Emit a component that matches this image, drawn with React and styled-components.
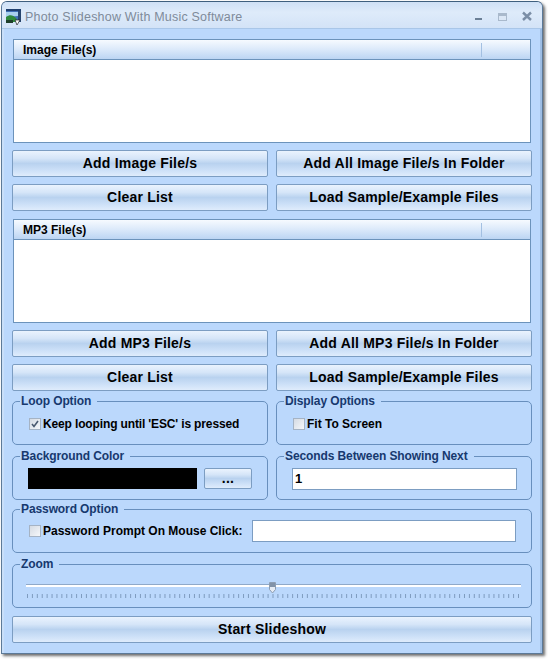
import React from "react";
import styled, { createGlobalStyle } from "styled-components";

const GlobalStyle = createGlobalStyle`
  html, body {
    margin: 0;
    padding: 0;
    background: #fff;
  }
  body {
    font-family: "Liberation Sans", Arial, sans-serif;
    color: #000;
  }
`;

const Page = styled.div`
  width: 550px;
  height: 661px;
  overflow: hidden;
  padding: 1px 0 0 1px;
  box-sizing: border-box;
`;

const Frame = styled.div`
  width: 542px;
  height: 653px;
  box-sizing: border-box;
  display: flex;
  flex-direction: column;
  background: #bbd8fc;
  border: 1px solid #5c7a99;
  border-top-color: #3f5f7e;
  border-radius: 6px 6px 0 0;
  box-shadow: 2px 2px 3px rgba(60, 60, 60, 0.75);
`;

const TitleBar = styled.div`
  height: 27px;
  flex: none;
  box-sizing: border-box;
  display: flex;
  align-items: center;
  padding: 2px 5px 0 3px;
  background: linear-gradient(#cfe0f5 0%, #deebfa 40%, #d3e3f7 100%);
  border-bottom: 1px solid #a9c6e8;
  border-radius: 5px 5px 0 0;
`;

const TitleText = styled.span`
  margin: 2px 0 0 3px;
  font-size: 12.5px;
  letter-spacing: 0.2px;
  color: #7f8b9a;
  flex: 1;
`;

const Body = styled.div`
  flex: 1;
  display: flex;
  flex-direction: column;
  padding: 10px 8px 0 8px;
  border-left: 2px solid #c9dff9;
  border-right: 2px solid #9dbde4;
`;

const ListBox = styled.div`
  height: 104px;
  box-sizing: border-box;
  margin: 0 0 7px 1px;
  width: 518px;
  background: #fff;
  border: 1px solid #6c93bb;
`;

const ListHeader = styled.div`
  height: 20px;
  display: flex;
  align-items: center;
  box-sizing: border-box;
  border-bottom: 1px solid #6c93bb;
  background: linear-gradient(#f6faff 0%, #dbe9fa 50%, #bcd5f3 100%);
  font-size: 12px;
  font-weight: bold;
`;

const HeaderCell = styled.span`
  flex: 1;
  padding-left: 9px;
`;

const HeaderTail = styled.span`
  width: 48px;
  height: 14px;
  border-left: 1px solid #a3c0e2;
`;

const ButtonGrid = styled.div`
  display: grid;
  grid-template-columns: 256px 256px;
  column-gap: 8px;
  row-gap: 7px;
  margin-bottom: ${({ $mb }) => $mb}px;
`;

const Button = styled.button`
  height: ${({ $small }) => ($small ? 21 : 27)}px;
  width: ${({ $small }) => ($small ? "48px" : "auto")};
  flex: none;
  padding: 0 0 2px;
  font-family: inherit;
  font-size: 14px;
  font-weight: bold;
  letter-spacing: 0.2px;
  color: #000;
  border: 1px solid #7c9dc2;
  border-radius: 2px;
  background: linear-gradient(
    #eaf3fe 0%,
    #d5e5f8 30%,
    #b9d2ef 50%,
    #cbdff7 75%,
    #dfecfc 100%
  );
`;

const GroupRow = styled.div`
  display: grid;
  grid-template-columns: 256px 256px;
  column-gap: 8px;
  margin-bottom: ${({ $mb }) => $mb}px;
`;

const FullGroup = styled.div`
  margin-bottom: ${({ $mb }) => $mb}px;
`;

const Group = styled.fieldset`
  margin: 0;
  min-width: 0;
  height: 51px;
  box-sizing: border-box;
  padding: 0 0 ${({ $pb }) => $pb || 5}px 15px;
  border: 1px solid #688fbd;
  border-radius: 5px;
  display: flex;
  align-items: center;
`;

const Legend = styled.legend`
  margin-left: -8px;
  padding: 0 6px 0 1px;
  font-size: 12px;
  font-weight: bold;
  letter-spacing: -0.1px;
  color: #17396e;
`;

const CheckRow = styled.label`
  display: flex;
  align-items: center;
  gap: 2px;
  margin-left: 1px;
  font-size: 12px;
  font-weight: bold;
  letter-spacing: ${({ $tight }) => ($tight ? "-0.14px" : "0")};
  white-space: nowrap;
`;

const CheckBox = styled.span`
  width: 10px;
  height: 10px;
  flex: none;
  display: flex;
  border: 1px solid #a5b3c4;
  background: linear-gradient(135deg, #d5dbe3, #f5f7fa);
`;

const ColorSwatch = styled.div`
  width: 169px;
  height: 21px;
  flex: none;
  background: #000;
  margin-right: 7px;
`;

const TextBox = styled.div`
  box-sizing: border-box;
  height: 22px;
  width: ${({ $w }) => $w}px;
  margin-left: ${({ $ml }) => $ml || 0}px;
  padding-left: 2px;
  display: flex;
  align-items: center;
  font-size: 13px;
  font-weight: bold;
  background: #fff;
  border: 1px solid #7c9dc2;
`;

const SliderWrap = styled.div`
  position: relative;
  width: 495px;
  margin: 13px 0 0 -2px;
  align-self: flex-start;
`;

const Track = styled.div`
  height: 2px;
  background: #fff;
  border-top: 1px solid #8fa9c9;
`;

const Thumb = styled.svg`
  position: absolute;
  left: 243px;
  top: -2px;
`;

const Ticks = styled.svg`
  display: block;
  margin-top: 7px;
`;

const CheckMark = () => (
  <svg width="10" height="10" viewBox="0 0 10 10">
    <path d="M2 5 L4 7.5 L8 2" fill="none" stroke="#4a5a70" strokeWidth="1.6" />
  </svg>
);

const AppIcon = () => (
  <svg width="17" height="17" viewBox="0 0 17 17">
    <rect x="1" y="1" width="15" height="13" fill="#3f6fb5" />
    <rect x="1" y="1" width="15" height="2" fill="#1f3f6f" />
    <path d="M1 4 H13 V8 L1 9 Z" fill="#a8d0ee" />
    <path d="M1 9 C5 6 8 7 11 10 L13 14 H1 Z" fill="#2f8a3c" />
    <path d="M1 12 H8 V15 H1 Z" fill="#1f3f2a" />
    <rect x="13" y="3" width="3" height="11" fill="#27466f" />
    <path d="M10 12 L15 12 L12 17 Z" fill="#fff" stroke="#222" strokeWidth="0.7" />
  </svg>
);

const WindowButtons = () => (
  <svg width="62" height="14" viewBox="0 0 62 14">
    <rect x="0" y="9" width="7" height="2" fill="#6b7f96" />
    <rect x="23.5" y="4.5" width="8" height="7" fill="#dbe7f6" stroke="#a9b9cc" />
    <rect x="24" y="5" width="7" height="2" fill="#a9b9cc" />
    <path d="M48 3.5 L56 11 M56 3.5 L48 11" stroke="#7b8ea6" strokeWidth="2.4" />
  </svg>
);

const tickXs = Array.from({ length: 101 }, (_, i) => 1.5 + i * 4.91);

const ZoomSlider = () => (
  <SliderWrap>
    <Track />
    <Thumb width="7" height="12" viewBox="0 0 7 12">
      <path d="M0.5 0.5 H6.5 V7.5 L3.5 11 L0.5 7.5 Z" fill="#e6ecf4" stroke="#8c9db2" />
      <rect x="1" y="1" width="5" height="4" fill="#8293a8" />
    </Thumb>
    <Ticks width="495" height="4" viewBox="0 0 495 4">
      {tickXs.map((x) => (
        <line key={x} x1={x} x2={x} y1="0" y2="4" stroke="#7f9cbf" />
      ))}
    </Ticks>
  </SliderWrap>
);

const FileList = ({ title }) => (
  <ListBox>
    <ListHeader>
      <HeaderCell>{title}</HeaderCell>
      <HeaderTail />
    </ListHeader>
  </ListBox>
);

const FileButtons = ({ kind, mb }) => (
  <ButtonGrid $mb={mb}>
    <Button>Add {kind} File/s</Button>
    <Button>Add All {kind} File/s In Folder</Button>
    <Button>Clear List</Button>
    <Button>Load Sample/Example Files</Button>
  </ButtonGrid>
);

export default function App() {
  return (
    <Page>
      <GlobalStyle />
      <Frame>
        <TitleBar>
          <AppIcon />
          <TitleText>Photo Slideshow With Music Software</TitleText>
          <WindowButtons />
        </TitleBar>
        <Body>
          <FileList title="Image File(s)" />
          <FileButtons kind="Image" mb={8} />
          <FileList title="MP3 File(s)" />
          <FileButtons kind="MP3" mb={3} />
          <GroupRow $mb={4}>
            <Group>
              <Legend>Loop Option</Legend>
              <CheckRow $tight>
                <CheckBox>
                  <CheckMark />
                </CheckBox>
                Keep looping until 'ESC' is pressed
              </CheckRow>
            </Group>
            <Group>
              <Legend>Display Options</Legend>
              <CheckRow>
                <CheckBox />
                Fit To Screen
              </CheckRow>
            </Group>
          </GroupRow>
          <GroupRow $mb={2}>
            <Group>
              <Legend>Background Color</Legend>
              <ColorSwatch />
              <Button $small>...</Button>
            </Group>
            <Group>
              <Legend>Seconds Between Showing Next</Legend>
              <TextBox $w={225}>1</TextBox>
            </Group>
          </GroupRow>
          <FullGroup $mb={4}>
            <Group $pb={7}>
              <Legend>Password Option</Legend>
              <CheckRow>
                <CheckBox />
                Password Prompt On Mouse Click:
              </CheckRow>
              <TextBox $w={264} $ml={10} />
            </Group>
          </FullGroup>
          <FullGroup $mb={8}>
            <Group>
              <Legend>Zoom</Legend>
              <ZoomSlider />
            </Group>
          </FullGroup>
          <Button>Start Slideshow</Button>
        </Body>
      </Frame>
    </Page>
  );
}
